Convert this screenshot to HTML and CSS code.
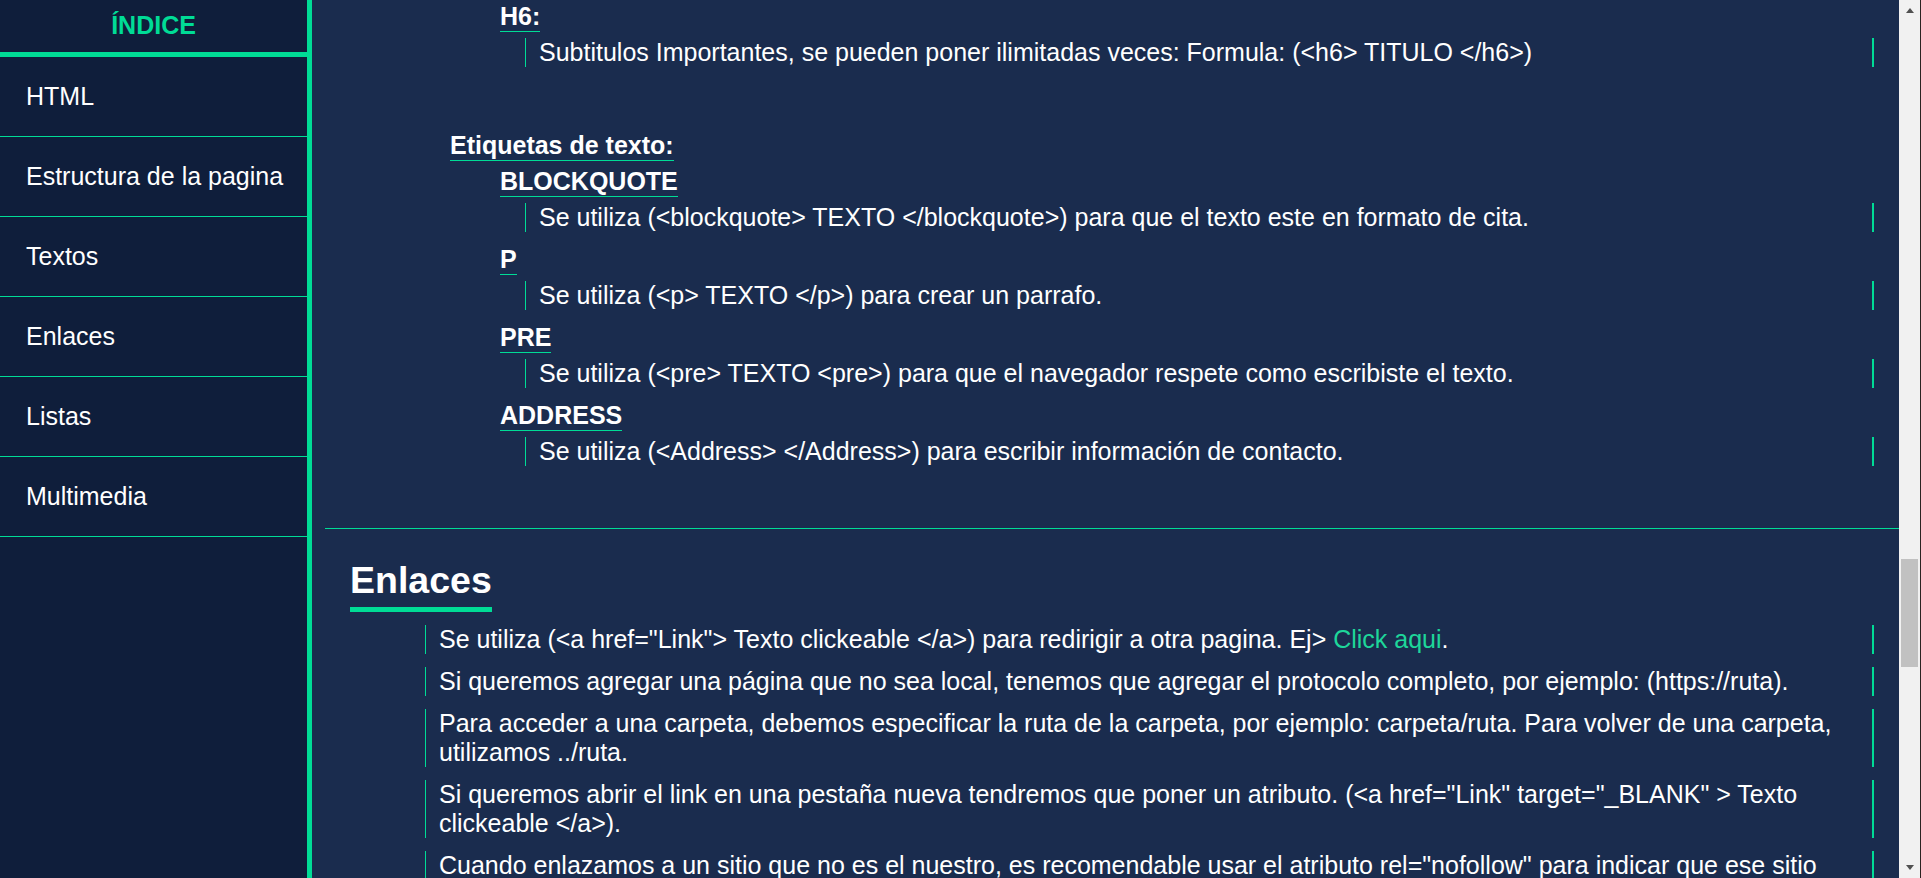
FILE: index.html
```html
<!DOCTYPE html>
<html lang="es">
<head>
<meta charset="utf-8">
<title>Apuntes HTML</title>
<link rel="stylesheet" href="styles.css">
</head>
<body>
<div class="layout">
  <nav class="sidebar">
    <h2 class="sidebar-title">ÍNDICE</h2>
    <ul class="menu">
      <li><a href="#html">HTML</a></li>
      <li><a href="#estructura">Estructura de la pagina</a></li>
      <li><a href="#textos">Textos</a></li>
      <li><a href="#enlaces">Enlaces</a></li>
      <li><a href="#listas">Listas</a></li>
      <li><a href="#multimedia">Multimedia</a></li>
    </ul>
  </nav>

  <main class="content">
    <section class="section section-textos" id="textos">
      <div class="group">
        <div class="tags">
          <div class="tag">
            <h4 class="tag-name">H6:</h4>
            <blockquote class="desc">Subtitulos Importantes, se pueden poner ilimitadas veces: Formula: (&lt;h6&gt; TITULO &lt;/h6&gt;)</blockquote>
          </div>
        </div>
      </div>

      <div class="group">
        <h3 class="group-title">Etiquetas de texto:</h3>
        <div class="tags">
          <div class="tag">
            <h4 class="tag-name">BLOCKQUOTE</h4>
            <blockquote class="desc">Se utiliza (&lt;blockquote&gt; TEXTO &lt;/blockquote&gt;) para que el texto este en formato de cita.</blockquote>
          </div>
          <div class="tag">
            <h4 class="tag-name">P</h4>
            <blockquote class="desc">Se utiliza (&lt;p&gt; TEXTO &lt;/p&gt;) para crear un parrafo.</blockquote>
          </div>
          <div class="tag">
            <h4 class="tag-name">PRE</h4>
            <blockquote class="desc">Se utiliza (&lt;pre&gt; TEXTO &lt;pre&gt;) para que el navegador respete como escribiste el texto.</blockquote>
          </div>
          <div class="tag">
            <h4 class="tag-name">ADDRESS</h4>
            <blockquote class="desc">Se utiliza (&lt;Address&gt; &lt;/Address&gt;) para escribir información de contacto.</blockquote>
          </div>
        </div>
      </div>
    </section>

    <section class="section section-plain" id="enlaces">
      <h2 class="section-title">Enlaces</h2>
      <div class="notes">
        <blockquote class="desc">Se utiliza (&lt;a href="Link"&gt; Texto clickeable &lt;/a&gt;) para redirigir a otra pagina. Ej&gt; <a class="link" href="#enlaces">Click aqui</a>.</blockquote>
        <blockquote class="desc">Si queremos agregar una página que no sea local, tenemos que agregar el protocolo completo, por ejemplo: (https://ruta).</blockquote>
        <blockquote class="desc">Para acceder a una carpeta, debemos especificar la ruta de la carpeta, por ejemplo: carpeta/ruta. Para volver de una carpeta, utilizamos ../ruta.</blockquote>
        <blockquote class="desc">Si queremos abrir el link en una pestaña nueva tendremos que poner un atributo. (&lt;a href="Link" target="_BLANK" &gt; Texto clickeable &lt;/a&gt;).</blockquote>
        <blockquote class="desc">Cuando enlazamos a un sitio que no es el nuestro, es recomendable usar el atributo rel="nofollow" para indicar que ese sitio externo no es de confianza.</blockquote>
      </div>
    </section>

    <section class="section section-plain" id="listas">
      <h2 class="section-title">Listas</h2>
      <div class="notes">
        <blockquote class="desc">Se utiliza (&lt;ul&gt; &lt;li&gt; ELEMENTO &lt;/li&gt; &lt;/ul&gt;) para crear una lista desordenada.</blockquote>
        <blockquote class="desc">Se utiliza (&lt;ol&gt; &lt;li&gt; ELEMENTO &lt;/li&gt; &lt;/ol&gt;) para crear una lista ordenada.</blockquote>
      </div>
    </section>
  </main>

  <div class="scroll-rail" aria-hidden="true">
    <div class="rail-button"><span class="arrow arrow-up"></span></div>
    <div class="rail-track"><div class="rail-thumb"></div></div>
    <div class="rail-button"><span class="arrow arrow-down"></span></div>
  </div>
</div>
</body>
</html>
```

FILE: styles.css
```css
html {
  scrollbar-width: none;
}

html,
body {
  margin: 0;
  padding: 0;
  background: #1a2c4e;
}

body {
  font-family: "Liberation Sans", Arial, sans-serif;
  font-size: 25px;
  color: #ffffff;
}

.layout {
  display: grid;
  grid-template-columns: 312px minmax(0, 1fr) 22px;
  align-items: start;
}

/* sidebar */
.sidebar {
  position: sticky;
  top: 0;
  height: 100vh;
  box-sizing: border-box;
  background: #0f1e3b;
  border-right: 5px solid #00dc96;
}

.sidebar-title {
  margin: 0;
  padding: 11px 0 12px;
  font-size: 25px;
  line-height: 29px;
  font-weight: bold;
  text-align: center;
  color: #00dc96;
  border-bottom: 5px solid #00dc96;
}

.menu {
  list-style: none;
  margin: 0;
  padding: 0;
}

.menu li {
  border-bottom: 1px solid #00dc96;
}

.menu a {
  display: block;
  padding: 25px 8px 25px 26px;
  line-height: 29px;
  white-space: nowrap;
  color: #ffffff;
  text-decoration: none;
}

/* main content */
.content {
  padding: 2px 0 0 13px;
}

.section {
  display: flex;
  flex-direction: column;
  border-bottom: 1px solid #00dc96;
  padding-bottom: 51px;
}

.section-textos {
  padding-bottom: 49px;
}

.section-plain {
  align-items: flex-start;
}

.group {
  margin-left: 125px;
}

.group + .group {
  margin-top: 51px;
}

.group-title {
  display: inline-block;
  margin: 0;
  font-size: 25px;
  font-weight: bold;
  border-bottom: 1px solid #00dc96;
}

.tags {
  margin: 6px 0 0 50px;
}

.group:first-child .tags {
  margin-top: 0;
}

.tag {
  display: flex;
  flex-direction: column;
  align-items: flex-start;
  margin-bottom: 13px;
}

.tag-name {
  margin: 0;
  font-size: 25px;
  font-weight: bold;
  border-bottom: 1px solid #00dc96;
}

.desc {
  align-self: stretch;
  margin: 6px 25px 0 25px;
  padding: 0 13px;
  border-left: 1px solid #00dc96;
  border-right: 2px solid #00dc96;
}

.section-title {
  margin: 30px 0 0 25px;
  padding-bottom: 5px;
  font-size: 37.5px;
  font-weight: bold;
  border-bottom: 5px solid #00dc96;
}

.notes {
  align-self: stretch;
}

.notes .desc {
  margin: 13px 25px 0 100px;
}

.link {
  color: #1ed69a;
  text-decoration: none;
}

/* window scrollbar */
.scroll-rail {
  position: sticky;
  top: 0;
  height: 100vh;
  display: flex;
  flex-direction: column;
  background: #f1f1f1;
  border-right: 1px solid #2a2220;
  box-sizing: border-box;
}

.rail-button {
  height: 21px;
  display: flex;
  align-items: center;
  justify-content: center;
}

.arrow {
  width: 0;
  height: 0;
  border-left: 4.5px solid transparent;
  border-right: 4.5px solid transparent;
}

.arrow-up {
  border-bottom: 5px solid #505050;
}

.arrow-down {
  border-top: 5px solid #505050;
}

.rail-track {
  flex: 1;
  padding: 0 2px 0 2px;
}

.rail-thumb {
  margin-top: 538px;
  height: 108px;
  background: #c1c1c1;
}
```
